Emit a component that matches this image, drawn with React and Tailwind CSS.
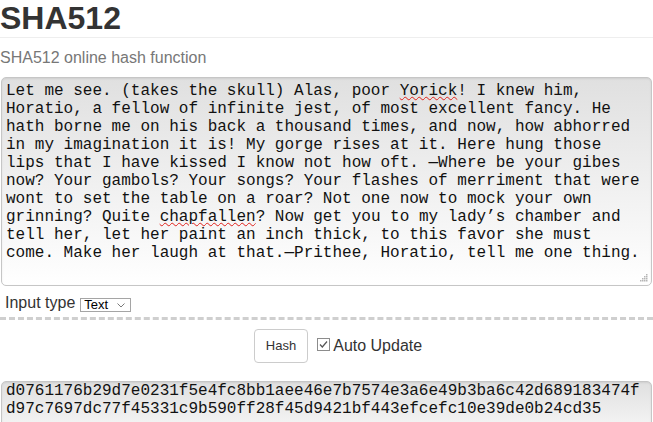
export default function App() {
  const hash =
    'd0761176b29d7e0231f5e4fc8bb1aee46e7b7574e3a6e49b3ba6c42d689183474fd97c7697dc77f45331c9b590ff28f45d9421bf443efcefc10e39de0b24cd35';

  return (
    <div className="min-h-screen bg-white text-[#333] font-['Liberation_Sans',Arial,sans-serif]">
      <h1 className="m-0 pt-px pb-[2px] text-[32px] leading-[34px] font-bold text-[#333] border-b border-[#eee]">
        SHA512
      </h1>
      <p className="mt-[10px] text-[16px] leading-5 text-[#777]">SHA512 online hash function</p>

      {/* input box */}
      <div className="relative mt-[9px] ml-px w-[651px] h-[209px] rounded-[5px] border border-[#c6c6c6] bg-linear-to-b from-[#e0e0e0] to-white px-[4px] pt-[4px] shadow-[inset_0_1px_2px_rgba(0,0,0,0.08)]">
        <div className="font-['Liberation_Mono','Courier_New',monospace] text-[16px] leading-[18px] text-[#111] break-words">
          Let me see. (takes the skull) Alas, poor{' '}
          <span className="underline decoration-wavy decoration-[#e0201a] decoration-1 underline-offset-[1px]">Yorick</span>! I knew him,
          Horatio, a fellow of infinite jest, of most excellent fancy. He hath borne me on his back a thousand times, and now, how
          abhorred in my imagination it is! My gorge rises at it. Here hung those lips that I have kissed I know not how oft. —Where
          be your gibes now? Your gambols? Your songs? Your flashes of merriment that were wont to set the table on a roar? Not one
          now to mock your own grinning? Quite{' '}
          <span className="underline decoration-wavy decoration-[#e0201a] decoration-1 underline-offset-[1px]">chapfallen</span>? Now
          get you to my lady’s chamber and tell her, let her paint an inch thick, to this favor she must come. Make her laugh at
          that.—Prithee, Horatio, tell me one thing.
        </div>
        <svg className="absolute right-[3px] bottom-[3px]" width="9" height="9" viewBox="0 0 9 9">
          <g fill="#b5b5b5">
            <rect x="7" y="1" width="1.5" height="1.5" />
            <rect x="5" y="3" width="1.5" height="1.5" />
            <rect x="7" y="3" width="1.5" height="1.5" />
            <rect x="3" y="5" width="1.5" height="1.5" />
            <rect x="5" y="5" width="1.5" height="1.5" />
            <rect x="7" y="5" width="1.5" height="1.5" />
            <rect x="1" y="7" width="1.5" height="1.5" />
            <rect x="3" y="7" width="1.5" height="1.5" />
            <rect x="5" y="7" width="1.5" height="1.5" />
            <rect x="7" y="7" width="1.5" height="1.5" />
          </g>
        </svg>
      </div>

      {/* input type */}
      <div className="mt-[7px] flex items-start h-5 pl-[5px]">
        <span className="text-[16px] leading-5 text-[#333]">Input type</span>
        <span className="relative ml-[5px] mt-[5px]">
          <select className="appearance-none block w-[51px] h-[14px] border border-[#a5a5a5] bg-white pl-[3px] text-[13px] leading-[12px] text-black font-['Liberation_Sans',Arial,sans-serif] outline-none">
            <option>Text</option>
            <option>Hex</option>
          </select>
          <svg className="pointer-events-none absolute right-[6px] top-[5px]" width="8" height="5" viewBox="0 0 8 5">
            <path d="M0.5 0.5 L4 4 L7.5 0.5" fill="none" stroke="#7a7a7a" strokeWidth="1" />
          </svg>
        </span>
      </div>

      <div className="mt-[4px] border-t-[3px] border-dashed border-[#cfcfcf]" />

      {/* actions */}
      <div className="mt-[9px] flex justify-center items-start pl-[23px]">
        <button className="h-[34px] px-[11px] rounded-[4px] border border-[#ccc] bg-white text-[13px] leading-4 text-[#333]">
          Hash
        </button>
        <label className="ml-[9px] flex items-start">
          <span className="mt-[9px] w-[13px] h-[13px] border border-[#8c8c8c] bg-white flex items-center justify-center">
            <svg width="11" height="11" viewBox="0 0 11 11">
              <path d="M2 5.5 L4.3 8 L9 2.5" fill="none" stroke="#555" strokeWidth="1.2" />
            </svg>
          </span>
          <span className="ml-[3px] mt-[7px] text-[16px] leading-5 text-[#333]">Auto Update</span>
        </label>
      </div>

      {/* output */}
      <div className="mt-[18px] ml-px w-[651px] h-[70px] rounded-[5px] border border-[#c6c6c6] bg-linear-to-b from-[#e0e0e0] to-white px-[4px] shadow-[inset_0_1px_2px_rgba(0,0,0,0.08)]">
        <div className="font-['Liberation_Mono','Courier_New',monospace] text-[16px] leading-[18px] text-[#111] break-all">
          {hash}
        </div>
      </div>
    </div>
  );
}
